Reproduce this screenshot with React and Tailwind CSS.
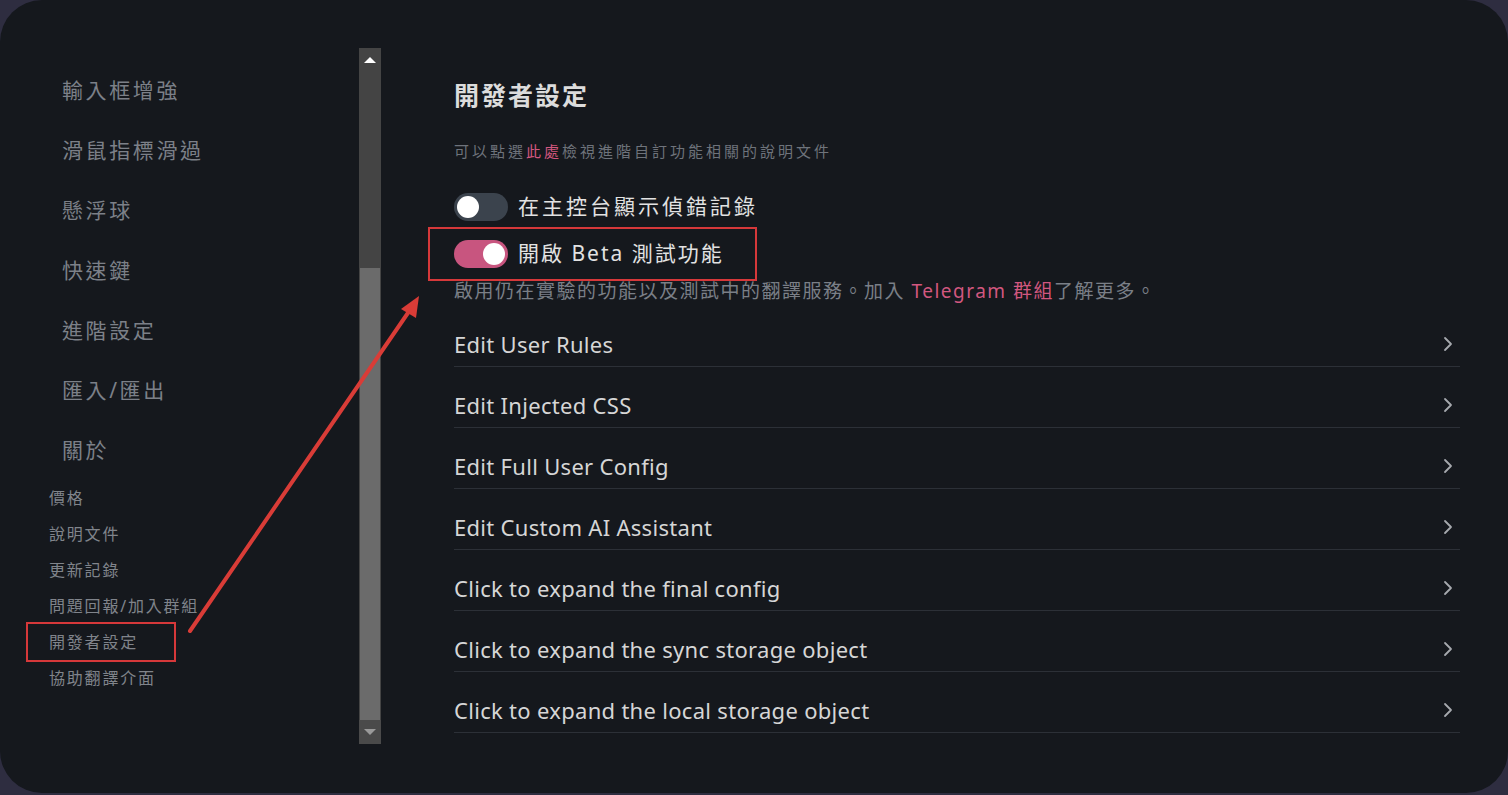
import React from "react";

const cjk = { fontFamily: '"Noto Sans", "Noto Sans CJK TC", sans-serif' };

function Chevron() {
  return (
    <svg width="12" height="18" viewBox="0 0 12 18" fill="none">
      <path d="M3 3 L9 9 L3 15" stroke="#a6a9ae" strokeWidth="1.8" strokeLinecap="round" strokeLinejoin="round" />
    </svg>
  );
}

function Toggle({ on }) {
  return (
    <div
      className={
        "w-[54px] h-[28px] rounded-full flex items-center px-[3px] shrink-0 " +
        (on ? "bg-[#c8557f] justify-end" : "bg-[#3b434d] justify-start")
      }
    >
      <div className="w-[22px] h-[22px] rounded-full bg-white" />
    </div>
  );
}

export default function App() {
  const big = ["輸入框增強", "滑鼠指標滑過", "懸浮球", "快速鍵", "進階設定", "匯入/匯出", "關於"];
  const small = ["價格", "說明文件", "更新記錄", "問題回報/加入群組", "開發者設定", "協助翻譯介面"];
  const rows = [
    "Edit User Rules",
    "Edit Injected CSS",
    "Edit Full User Config",
    "Edit Custom AI Assistant",
    "Click to expand the final config",
    "Click to expand the sync storage object",
    "Click to expand the local storage object",
  ];
  return (
    <div className="w-[1508px] h-[795px] bg-[#2e2d40] overflow-hidden" style={cjk}>
      <div className="relative w-[1508px] h-[793px] rounded-[42px] bg-[#15181d] flex">
        {/* sidebar */}
        <div className="w-[359px] shrink-0 pt-[60px]">
          {big.map((t) => (
            <div key={t} className="pl-[62px] text-[21px] leading-[60px] text-[#7c8088] tracking-[2.6px]">
              {t}
            </div>
          ))}
          {small.map((t) => (
            <div key={t} className="pl-[49px] text-[16px] leading-[36px] text-[#80848b] tracking-[1.8px]">
              {t}
            </div>
          ))}
        </div>
        {/* scrollbar */}
        <div className="mt-[48px] w-[22px] h-[696px] bg-[#444444] flex flex-col shrink-0">
          <div className="h-[24px] flex items-center justify-center">
            <div className="w-0 h-0 border-l-[6px] border-r-[6px] border-b-[6px] border-l-transparent border-r-transparent border-b-white" />
          </div>
          <div className="h-[196px]" />
          <div className="h-[452px] bg-[#6b6b6b] mx-[1px]" />
          <div className="h-[24px] flex items-center justify-center bg-[#4a4a4a]">
            <div className="w-0 h-0 border-l-[6px] border-r-[6px] border-t-[6px] border-l-transparent border-r-transparent border-t-[#9a9a9a]" />
          </div>
        </div>
        {/* main */}
        <div className="pl-[73px] pt-[78px] w-[1079px] shrink-0">
          <div className="text-[25px] leading-[34px] font-bold text-[#dcdcdc] tracking-[2px]">開發者設定</div>
          <div className="mt-[29px] text-[15px] leading-[20px] text-[#6e737b] tracking-[3px]">
            可以點選<span className="text-[#d2577f]">此處</span>檢視進階自訂功能相關的說明文件
          </div>
          <div className="mt-[32px] flex items-center gap-[10px] h-[28px]">
            <Toggle on={false} />
            <span className="text-[21px] text-[#e2e2e2] tracking-[3px]">在主控台顯示偵錯記錄</span>
          </div>
          <div className="mt-[19px] flex items-center gap-[10px] h-[28px]">
            <Toggle on={true} />
            <span className="text-[21px] text-[#e2e2e2] tracking-[2px]">開啟 Beta 測試功能</span>
          </div>
          <div className="mt-[11px] text-[19px] leading-[24px] text-[#7a7f87] tracking-[1.5px]">
            啟用仍在實驗的功能以及測試中的翻譯服務。加入 <span className="text-[#d2577f]">Telegram 群組</span>了解更多。
          </div>
          <div className="mt-[3px] w-[1006px]">
            {rows.map((t) => (
              <div
                key={t}
                className="flex items-center justify-between pt-[24px] pb-[8px] border-b border-[#2c3037]"
              >
                <span className="text-[22px] leading-[28px] text-[#d6d6d6] tracking-[0.3px]">{t}</span>
                <span className="mr-[6px] flex items-center">
                  <Chevron />
                </span>
              </div>
            ))}
          </div>
        </div>

        {/* annotations */}
        <div className="absolute left-[26px] top-[622px] w-[150px] h-[40px] border-2 border-[#d6383a]" />
        <div className="absolute left-[428px] top-[227px] w-[329px] h-[54px] border-2 border-[#d6383a]" />
        <svg className="absolute left-0 top-0 pointer-events-none" width="1508" height="795">
          <line x1="190" y1="631" x2="412" y2="307" stroke="#d93c37" strokeWidth="4" strokeLinecap="round" />
          <polygon points="419,296 401,309 416,318" fill="#d93c37" />
        </svg>
      </div>
    </div>
  );
}
